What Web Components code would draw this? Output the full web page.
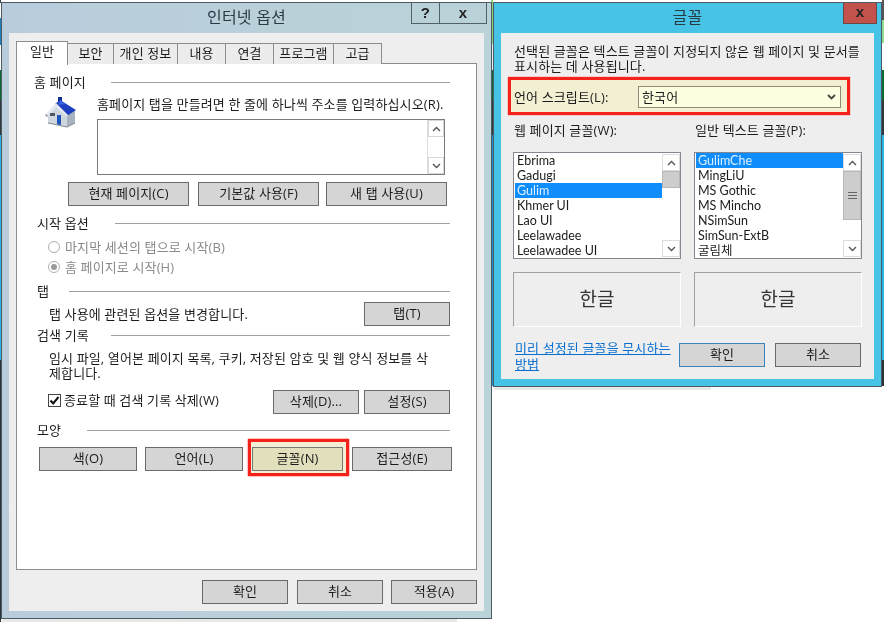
<!DOCTYPE html>
<html lang="ko"><head><meta charset="utf-8"><title>인터넷 옵션</title>
<style>
html,body{margin:0;padding:0;background:#fff}
body{font:13px/15px "Open Sans","Noto Sans CJK KR",sans-serif;letter-spacing:.13px;color:#1c1c1c;width:884px;height:622px;overflow:hidden}
</style></head><body>
<x-desktop>
  <x-window label="인터넷 옵션" style="left:1px;top:2px;width:491px;height:617px;--title:linear-gradient(90deg,#b9ccdc,#b9d3d8);--cap:#b9d3d8;--shadow:455px">
    <x-captions slot="caps"></x-captions>
    <x-tabstrip>
      <x-tab active style="width:52px">일반</x-tab><x-tab style="width:46px">보안</x-tab><x-tab style="width:64px">개인 정보</x-tab><x-tab style="width:48px">내용</x-tab><x-tab style="width:48px">연결</x-tab><x-tab style="width:60px">프로그램</x-tab><x-tab style="width:48px">고급</x-tab>
    </x-tabstrip>
    <x-pane>
      <x-group style="--x:17px;--w:77px;margin-top:10px">홈 페이지</x-group>
      <x-home-row>
        <x-house slot="icon"></x-house>
        <x-line>홈페이지 탭을 만들려면 한 줄에 하나씩 주소를 입력하십시오(R).</x-line>
      </x-home-row>
      <x-btns style="--pl:51px;margin-top:7px">
        <x-btn style="width:121px">현재 페이지(C)</x-btn><x-btn style="width:121px;margin-left:9px">기본값 사용(F)</x-btn><x-btn style="width:121px;margin-left:7px">새 탭 사용(U)</x-btn>
      </x-btns>
      <x-group style="--x:20px;--w:78px;margin-top:9px">시작 옵션</x-group>
      <x-radio style="margin-top:8px">마지막 세션의 탭으로 시작(B)</x-radio>
      <x-radio checked style="margin-top:4px">홈 페이지로 시작(H)</x-radio>
      <x-group style="--x:20px;--w:32px;margin-top:8px">탭</x-group>
      <x-btns style="--pl:32px;margin-top:3px;justify-content:space-between;width:433px">
        <x-line>탭 사용에 관련된 옵션을 변경합니다.</x-line><x-btn style="width:86px">탭(T)</x-btn>
      </x-btns>
      <x-group style="--x:20px;--w:74px;margin-top:1px">검색 기록</x-group>
      <x-btns style="--pl:32px;margin-top:8px"><x-line>임시 파일, 열어본 페이지 목록, 쿠키, 저장된 암호 및 웹 양식 정보를 삭<br>제합니다.</x-line></x-btns>
      <x-btns style="--pl:31px;margin-top:9px">
        <x-check>종료할 때 검색 기록 삭제(W)</x-check>
        <x-btn style="width:86px;margin-left:auto">삭제(D)...</x-btn><x-btn style="width:86px;margin-left:5px;margin-right:26px">설정(S)</x-btn>
      </x-btns>
      <x-group style="--x:20px;--w:50px;margin-top:8px">모양</x-group>
      <x-btns style="--pl:22px;margin-top:9px">
        <x-btn style="width:98px">색(O)</x-btn><x-btn style="width:98px;margin-left:8px">언어(L)</x-btn><x-btn marked style="width:91px;margin-left:9px">글꼴(N)</x-btn><x-btn style="width:100px;margin-left:9px">접근성(E)</x-btn>
      </x-btns>
    </x-pane>
    <x-btns style="--pl:186px;margin-top:10px">
      <x-btn style="width:86px">확인</x-btn><x-btn style="width:86px;margin-left:9px">취소</x-btn><x-btn style="width:86px;margin-left:8px">적용(A)</x-btn>
    </x-btns>
  </x-window>

  <x-window label="글꼴" style="left:493px;top:2px;width:389px;height:385px;--title:#47c3e6;--cap:#47c3e6;--shadow:217px">
    <x-close slot="caps"></x-close>
    <x-font-body>
      <x-line>선택된 글꼴은 텍스트 글꼴이 지정되지 않은 웹 페이지 및 문서를<br>표시하는 데 사용됩니다.</x-line>
      <x-script-row>언어 스크립트(L):<x-select slot="sel">한국어</x-select></x-script-row>
      <x-font-cols>
        <x-line>웹 페이지 글꼴(W):</x-line><x-line>일반 텍스트 글꼴(P):</x-line>
        <x-list thumb-h="17">
          <x-item>Ebrima</x-item><x-item>Gadugi</x-item><x-item selected>Gulim</x-item><x-item>Khmer UI</x-item><x-item>Lao UI</x-item><x-item>Leelawadee</x-item><x-item>Leelawadee UI</x-item>
        </x-list>
        <x-list thumb-h="49" grip>
          <x-item selected>GulimChe</x-item><x-item>MingLiU</x-item><x-item>MS Gothic</x-item><x-item>MS Mincho</x-item><x-item>NSimSun</x-item><x-item>SimSun-ExtB</x-item><x-item>굴림체</x-item>
        </x-list>
        <x-preview>한글</x-preview><x-preview>한글</x-preview>
      </x-font-cols>
      <x-font-foot>
        <x-link>미리 설정된 글꼴을 무시하는<br>방법</x-link>
        <x-btn primary style="width:86px;margin-left:auto">확인</x-btn><x-btn style="width:86px;margin-left:10px">취소</x-btn>
      </x-font-foot>
    </x-font-body>
  </x-window>
</x-desktop>

<script>
function def(name, css, html){
  customElements.define(name, class extends HTMLElement{
    constructor(){super();const r=this.attachShadow({mode:'open'});
      r.innerHTML='<style>'+css+'</style>'+html(this);}
  });
}
const chev=(d)=>`<svg width="9" height="6" viewBox="0 0 9 6"><path d="${d==='up'?'M1 5L4.5 1.5L8 5':'M1 1L4.5 4.5L8 1'}" fill="none" stroke="#555" stroke-width="1.4"/></svg>`;

def('x-desktop',`:host{display:block;position:relative;width:884px;height:622px;overflow:hidden;filter:blur(.35px);background:
  linear-gradient(#3d4a52 0 3px,#fff 3px 18px,#1c7fc0 18px 45px,#fff 45px 70px,#0c6a33 70px 100px,#33373b 100px 135px,#28b4e8 135px 360px,#2c3136 360px 622px) 0 0/1px 100% no-repeat,
  linear-gradient(#8fd27f 0 44px,#e9eef0 44px 70px,#0c6a33 70px 100px,#33373b 100px 135px,#1c8fd0 135px 386px,#fff 386px) 491px 0/2px 100% no-repeat,
  linear-gradient(#555 0 20px,#92dc92 20px 43px,#fff 43px 70px,#0c6a33 70px 100px,#33373b 100px 135px,#28b4e8 135px 360px,#2c3136 360px 386px,#fff 386px) 882px 0/2px 100% no-repeat,#fff}`,
 ()=>`<slot></slot>`);

def('x-window',`:host{display:block;position:absolute;box-sizing:border-box;border:1px solid #4c5a62;background:var(--title);padding:0 7px 7px}
 :host::after{content:"";position:absolute;left:0;top:100%;margin-top:1px;width:var(--shadow);height:3px;background:#e8e8e8}
 header{height:30px;box-sizing:border-box;padding-bottom:1px;display:flex;align-items:center;justify-content:center;font-size:16px;color:#2a3a44;letter-spacing:.2px}
 .caps{position:absolute;right:4px;top:0;display:flex}
 main{display:block;box-sizing:border-box;background:#eee;height:calc(100% - 30px);padding:8px 0 0 7px}`,
 h=>`<header>${h.getAttribute('label')}</header><div class="caps"><slot name="caps"></slot></div><main><slot></slot></main>`);

def('x-captions',`:host{display:flex;height:21px;border:1px solid #52626a;border-top:0;box-sizing:border-box;background:#b8d2d8;font:700 15px/19px "Liberation Sans",sans-serif;color:#222;text-align:center}
 span{display:block;width:27px}span+span{width:46px;border-left:1px solid #52626a}`,
 ()=>`<span>?</span><span>x</span>`);
def('x-close',`:host{display:block;box-sizing:border-box;width:34px;height:21px;background:#c4524c;border:1px solid #6d4644;border-top:0;font:700 15px/18px "Liberation Sans",sans-serif;color:#222;text-align:center}`,
 ()=>`x`);

def('x-tabstrip',`:host{display:flex;height:23px;align-items:flex-end;position:relative;z-index:1;margin-bottom:-1px}`,()=>`<slot></slot>`);
def('x-tab',`:host{display:flex;box-sizing:border-box;height:21px;align-items:center;justify-content:center;border:1px solid #8d8d8d;border-bottom:0;border-left-width:0;background:#ececec;padding-bottom:1px;white-space:nowrap}
 :host([active]){height:24px;background:#fff;border-left-width:1px;margin-bottom:-1px;padding-bottom:5px}`,()=>`<slot></slot>`);

def('x-pane',`:host{display:block;position:relative;z-index:0;box-sizing:border-box;width:461px;height:507px;background:#fff;border:1px solid #8d8d8d}`,()=>`<slot></slot>`);

def('x-group',`:host{display:flex;align-items:center;height:16px;padding-left:var(--x);padding-right:26px}
 span{flex:none;width:var(--w);white-space:nowrap}i{flex:1;height:1px;background:#a0a0a0}`,
 ()=>`<span><slot></slot></span><i></i>`);

def('x-line',`:host{display:block;white-space:nowrap}`,()=>`<slot></slot>`);

def('x-home-row',`:host{display:flex;height:79px;padding:0 0 0 28px;margin-top:6px}
 .i{width:52px;padding-top:1px;box-sizing:border-box}
 .txt{height:23px;line-height:16px}
 .ta{box-sizing:border-box;width:348px;height:56px;border:1px solid #7a7a7a;background:#fff;display:flex;justify-content:flex-end}`,
 ()=>`<div class="i"><slot name="icon"></slot></div><div><div class="txt"><slot></slot></div><div class="ta"><x-scroll></x-scroll></div></div>`);

def('x-house',`:host{display:block;width:32px;height:31px}`,()=>`<svg width="32" height="31" viewBox="0 0 32 31">
 <rect x="13" y="0" width="4" height="5" fill="#14308e"/>
 <path d="M3 19L11 10L22 19V30L3 26Z" fill="#cfd6de"/>
 <path d="M22 18L30 13L30 26L22 30Z" fill="#a9b3bf"/>
 <path d="M10 7L15 3L31 13L22 19Z" fill="#1d3fc0"/>
 <path d="M15 3L21 7L13 8Z" fill="#3b63e0"/>
 <path d="M0 18L11 6L23 18L22 20L11 10L2 20Z" fill="#e4e8ee"/>
 <path d="M0 18L2 20L3 19L1 17Z" fill="#8d97a3"/>
 <rect x="5" y="16" width="5" height="3" fill="#4d5762"/>
 <path d="M12 18H16V28L12 27.5Z" fill="#1c56b8"/>
 <path d="M3 26L22 30L30 26" fill="none" stroke="#7f8995" stroke-width="1"/></svg>`);

def('x-btns',`:host{display:flex;align-items:center;box-sizing:border-box;padding-left:var(--pl)}`,()=>`<slot></slot>`);

def('x-btn',`:host{display:flex;flex:none;box-sizing:border-box;height:24px;align-items:center;justify-content:center;background:#d5d5d5;border:1px solid #6a6a6a;white-space:nowrap;padding-bottom:1px;position:relative}
 :host([primary]){border-color:#3a83b8}
 :host([marked]){background:#e2dfbc;border-color:#777}
 :host([marked])::before{content:"";position:absolute;z-index:-1;left:-5px;top:-9px;right:-7px;bottom:-6px;box-sizing:border-box;border:3px solid #f5211b;background:#f3efd3;box-shadow:0 0 1.5px #f5211b}`,()=>`<slot></slot>`);

def('x-radio',`:host{display:flex;align-items:center;height:16px;padding-left:31px;color:#8a8a8a;white-space:nowrap}
 b{flex:none;box-sizing:border-box;width:12px;height:12px;border:1px solid #b0b0b0;border-radius:50%;margin-right:5px;display:flex;align-items:center;justify-content:center;background:#fff}
 :host([checked]) b::after{content:"";width:6px;height:6px;border-radius:50%;background:#9a9a9a}`,()=>`<b></b><slot></slot>`);

def('x-check',`:host{display:flex;align-items:center;white-space:nowrap;margin-top:-4px}
 svg{flex:none;margin-right:3px}`,()=>`<svg width="13" height="13" viewBox="0 0 13 13"><rect x=".5" y=".5" width="12" height="12" fill="#fff" stroke="#444"/><path d="M2.5 6.5L5.2 9.5L10.5 3" fill="none" stroke="#111" stroke-width="2"/></svg><slot></slot>`);

def('x-scroll',`:host{display:flex;flex-direction:column;box-sizing:border-box;width:17px;flex:none;height:100%;background:#fff;border-left:1px solid #ddd}
 .a{height:17px;box-sizing:border-box;border:1px solid #d8d8d8;display:flex;align-items:center;justify-content:center;flex:none}
 .m{flex:1}`,()=>`<div class="a">${chev('up')}</div><div class="m"></div><div class="a">${chev('down')}</div>`);

def('x-font-body',`:host{display:block;padding:3px 0 0 6px}`,()=>`<slot></slot>`);

def('x-script-row',`:host{display:flex;align-items:center;box-sizing:border-box;width:336px;height:32px;margin:6px 0 0 -3px;padding:2px 6px 0 3px;background:#f3efd3;outline:3px solid #f5211b;box-shadow:0 0 0 3.5px rgba(245,33,27,.35);white-space:nowrap}
 span{flex:1}`,()=>`<span><slot></slot></span><slot name="sel"></slot>`);
def('x-select',`:host{display:flex;align-items:center;box-sizing:border-box;width:203px;height:22px;background:#fdfde0;border:1px solid #8c8c78;padding:0 4px 0 3px}
 span{flex:1}svg{display:block}`,()=>`<span><slot></slot></span><svg width="9" height="6" viewBox="0 0 9 6"><path d="M1 1L4.5 4.5L8 1" fill="none" stroke="#444" stroke-width="1.8"/></svg>`);

def('x-font-cols',`:host{display:grid;grid-template-columns:168px 168px;column-gap:13px;grid-template-rows:16px 107px 55px;row-gap:13px;margin:11px 0 0 -1px}
 ::slotted(x-line){padding-left:1px}`,()=>`<slot></slot>`);

def('x-list',`:host{display:flex;box-sizing:border-box;border:1px solid #828790;background:#fff;height:107px}
 .l{flex:1;min-width:0;padding:0 0 0 1px}
 .s{width:18px;flex:none;display:flex;flex-direction:column;margin:1px 0}
 .a{height:17px;flex:none;box-sizing:border-box;border:1px solid #dcdcdc;display:flex;align-items:center;justify-content:center}
 .m{flex:1}
 .t{box-sizing:border-box;background:#cdcdcd;border:1px solid #b8b8b8;display:flex;align-items:center;justify-content:center}
 .g{width:9px;height:7px;background:repeating-linear-gradient(#666 0 1px,transparent 1px 3px)}`,
 h=>`<div class="l"><slot></slot></div><div class="s"><div class="a">${chev('up')}</div><div class="m"><div class="t" style="height:${h.getAttribute('thumb-h')}px">${h.hasAttribute('grip')?'<div class="g"></div>':''}</div></div><div class="a">${chev('down')}</div></div>`);
def('x-item',`:host{display:block;height:15px;line-height:15px;padding-left:2px;white-space:nowrap;font:12.5px/15px Lato,"Noto Sans CJK KR",sans-serif;letter-spacing:0}
 :host([selected]){background:#0f8dfd;color:#dff0ff}`,()=>`<slot></slot>`);

def('x-preview',`:host{display:flex;align-items:center;justify-content:center;box-sizing:border-box;height:55px;border:1px solid;border-color:#a0a0a0 #fff #fff #a0a0a0;font-size:19px;color:#333}`,()=>`<slot></slot>`);

def('x-font-foot',`:host{display:flex;align-items:flex-start;width:348px;margin:16px 0 0 -1px}`,()=>`<slot></slot>`);
def('x-link',`:host{display:block;color:#0a70d0;text-decoration:underline;white-space:nowrap;padding-left:2px;margin-top:-3px;line-height:16px}`,()=>`<slot></slot>`);
</script>
</body></html>
